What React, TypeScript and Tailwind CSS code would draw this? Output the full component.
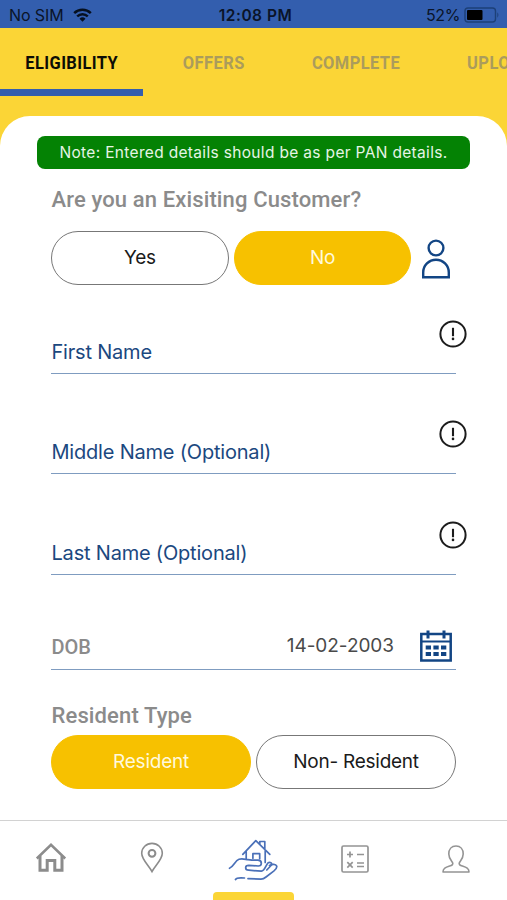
import { useState } from "react";
import clsx from "clsx";

const tabs = [
  { label: "ELIGIBILITY", className: "w-[143px]" },
  { label: "OFFERS", className: "w-[142px]" },
  { label: "COMPLETE", className: "w-[143px]" },
  { label: "UPLOAD", className: "w-[143px]" },
];

function StatusBar() {
  return (
    <div className="flex h-7 shrink-0 items-center bg-[#335eae] pt-0.5 text-[16px] text-[#0a1428]">
      <div className="flex w-[170px] items-center gap-[9px] pl-[9px]">
        <span className="tracking-[-0.1px]">No SIM</span>
        <svg width="19" height="14" viewBox="0 0 19 14" fill="none" stroke="#06101f">
          <path d="M1.2 5.2C5.8 .7 13.2 .7 17.8 5.2" strokeWidth="2.5" />
          <path d="M4.2 8.4c3-2.9 7.6-2.9 10.6 0" strokeWidth="2.4" />
          <path d="M6.500 10.800a4.300 4.300 0 0 1 6 0l-3 3z" fill="#06101f" stroke="none" />
        </svg>
      </div>
      <div className="w-[171px] pt-px text-center text-[15.5px] font-semibold tracking-[0.5px]">12:08 PM</div>
      <div className="flex flex-1 items-center justify-end gap-1 pr-[7px]">
        <span className="tracking-[-0.4px]">52%</span>
        <svg width="36" height="16" viewBox="0 0 36 16">
          <rect x="1" y="1" width="30.500" height="14" rx="3" fill="none" stroke="#1d4078" strokeWidth="1.4" />
          <rect x="3" y="3" width="15.500" height="10" rx="1" fill="#000" />
          <path d="M33.300 5.300q2.300 2.700 0 5.400z" fill="#1d4078" />
        </svg>
      </div>
    </div>
  );
}

function InfoIcon() {
  return (
    <svg className="absolute -right-[11px] top-0" width="28" height="28" viewBox="0 0 28 28" fill="none" stroke="#1c1c1c">
      <circle cx="14" cy="14" r="12.600" strokeWidth="2" />
      <path d="M14 7.800v8.400" strokeWidth="2.100" />
      <circle cx="14" cy="18.900" r="1.300" fill="#1c1c1c" stroke="none" />
    </svg>
  );
}

function Field({ label }: { label: string }) {
  return (
    <div className="relative mb-[46.5px] flex h-[54px] items-end border-b-[1.5px] border-[#7f9cc0] pb-[6px] pl-[0.5px] text-[20px] leading-[30px] tracking-[-0.2px] text-[#1b4880]">
      {label}
      <InfoIcon />
    </div>
  );
}

function Pill({ label, active, onClick, className }: { label: string; active: boolean; onClick: () => void; className: string }) {
  return (
    <button
      onClick={onClick}
      className={clsx(
        "h-[54px] rounded-[27px] border text-[19px] tracking-[-0.25px]",
        active ? "border-[#f7c100] bg-[#f7c100] text-[#fff9dd]" : "border-[#777] bg-white text-[#1a1a1a]",
        className
      )}
    >
      {label}
    </button>
  );
}

function CalendarIcon() {
  return (
    <svg className="relative top-px" width="32" height="33" viewBox="0 0 32 33" fill="none" stroke="#124584">
      <rect x="1.300" y="4" width="29.400" height="26.500" strokeWidth="2.500" />
      <path d="M1 11.500h30" strokeWidth="2" />
      <path d="M8 .5v8M24 .5v8" strokeWidth="3" />
      <path d="M5.700 17.400h5.300M13.400 17.400h5.300M21 17.400h5.300M5.700 24h5.300M13.400 24h5.300M21 24h5.300" strokeWidth="4" />
    </svg>
  );
}

function BottomNav() {
  return (
    <nav className="grid h-20 shrink-0 grid-cols-5 border-t-[1.5px] border-[#d2d2d2] bg-white">
      <div className="flex justify-center pt-[21px]">
        <svg width="32" height="32" viewBox="0 0 32 32" fill="none" stroke="#8c8c8c">
          <path d="M1.800 16.500 16 2.800 30.200 16.500" strokeWidth="2.500" />
          <path d="M5 14v14.200h7.200V18.500h7.600v9.700H27V14" strokeWidth="3" />
        </svg>
      </div>
      <div className="flex justify-center pt-[21px]">
        <svg width="24" height="32" viewBox="0 0 24 32" fill="none" stroke="#8c8c8c" strokeWidth="1.600">
          <path d="M12 29.500C8.800 23.500 1.700 17.500 1.700 11.200a10.300 9.800 0 0 1 20.600 0C22.300 17.500 15.200 23.500 12 29.500z" />
          <circle cx="12" cy="11.300" r="3.400" strokeWidth="2" />
        </svg>
      </div>
      <div className="relative flex justify-center pt-[17px]">
        <svg width="50" height="43" viewBox="0 0 50 43" fill="none" stroke="#4a70b8" strokeWidth="1.700" strokeLinecap="round" strokeLinejoin="round">
          <path d="M14.800 16.300 27.800 2.700 41.800 16.300M18.200 13.500v7.300M37.200 13v11.500M31.800 6V3.500h5v8M24.900 20.300v-4.600h6.800v5" />
          <path d="M1.500 30.300C5.500 29 7 22.700 11 21.300c3-.9 6 0 9 .3 3 .5 6 .7 10 .6 4.600.4 4.200 5.600.3 5.800l-9.500-.7c-4.200 0-4.200 4.600 0 4.900l12.500 1c3.800-.4 4.400-6.400 6.800-8.400 2-1.300 4.300.3 3.400 2.200l-4.700 5" />
          <path d="M41.500 27.500c2.800-1.700 6.300-1.700 7.200.6.600 2-1.300 3.600-3 5L38 39c-1.700 1.500-3 2.200-5 2.200l-13-.6M7.500 41.500c1-2 4-2 9-1.500" />
        </svg>
        <div className="absolute bottom-0 h-2 w-[81px] rounded-t-[4px] bg-[#fbd536]" />
      </div>
      <div className="flex justify-center pt-6">
        <svg width="28" height="28" viewBox="0 0 28 28" fill="none" stroke="#949494" strokeWidth="1.700">
          <rect x="1" y="1" width="26" height="26" rx="1.500" />
          <path d="M6 9.500h6M9 6.500v6M16 9.500h7M6.300 17.200l5.400 5.400M11.700 17.200l-5.400 5.400M16 18h7M16 21.500h7" />
        </svg>
      </div>
      <div className="flex justify-center pt-6">
        <svg width="28" height="29" viewBox="0 0 28 29" fill="none" stroke="#949494" strokeWidth="1.600" strokeLinejoin="round">
          <path d="M14 1C9.500 1 6.800 4.200 6.800 9c0 4.300 2.200 6.300 3.700 8.500.9 1.600-.2 2.700-2 3.300C4 22.300 1 23 1 27h26c0-4-3-4.700-7.500-6.200-1.800-.6-2.900-1.700-2-3.300 1.500-2.200 3.700-4.200 3.700-8.500C21.200 4.200 18.500 1 14 1z" />
        </svg>
      </div>
    </nav>
  );
}

export default function App() {
  const [tab, setTab] = useState("ELIGIBILITY");
  const [existing, setExisting] = useState("No");
  const [resident, setResident] = useState("Resident");

  return (
    <div className="flex h-[900px] w-[507px] flex-col overflow-hidden bg-[#fbd536] font-[Inter,sans-serif]">
      <StatusBar />
      <div className="flex h-[88px] shrink-0 items-start overflow-hidden">
        {tabs.map((t) => (
          <button
            key={t.label}
            onClick={() => setTab(t.label)}
            className={clsx(
              "flex h-[68px] shrink-0 items-center justify-center border-b-[7px] pt-[10px] font-[Roboto,sans-serif] text-[19px] font-bold tracking-[0.5px]",
              t.className,
              tab === t.label ? "border-[#335eae] text-[#0d0d05]" : "border-transparent text-[#ab9c5c]"
            )}
          >
            <span className="inline-block scale-x-[0.865]">{t.label}</span>
          </button>
        ))}
      </div>

      <main className="min-h-0 flex-1 rounded-t-[30px] bg-white pt-5">
        <div className="ml-[37px] flex h-[33px] w-[433px] items-center justify-center rounded-[8px] bg-[#048204] pt-px text-[15.5px] tracking-[0.33px] text-[#e6f5e6]">
          Note: Entered details should be as per PAN details.
        </div>
        <div className="ml-[51px] w-[405px]">
          <h2 className="mt-[16px] h-[30px] whitespace-nowrap pl-[0.5px] font-[Roboto,sans-serif] text-[22px] font-medium leading-[30px] tracking-[0.13px] text-[#8b8b8b]">
            Are you an Exisiting Customer?
          </h2>
          <div className="mt-[16px] flex items-center gap-[5px]">
            <Pill label="Yes" active={existing === "Yes"} onClick={() => setExisting("Yes")} className="w-[178px]" />
            <Pill label="No" active={existing === "No"} onClick={() => setExisting("No")} className="w-[177px]" />
            <svg className="relative top-px ml-[5px] shrink-0" width="30" height="40" viewBox="0 0 30 40" fill="none" stroke="#124584" strokeWidth="2.400">
              <circle cx="15" cy="9" r="7.400" />
              <path d="M2.200 38.300V33.500a12.800 12.800 0 0 1 25.600 0v4.800z" />
            </svg>
          </div>

          <div className="mt-[34.5px]">
            <Field label="First Name" />
            <Field label="Middle Name (Optional)" />
            <Field label="Last Name (Optional)" />
          </div>

          <div className="flex h-[49px] items-center border-b-[1.5px] border-[#7f9cc0] pr-1">
            <span className="pl-[0.5px] pt-1 font-[Roboto,sans-serif] text-[20px] font-medium text-[#8b8b8b]">DOB</span>
            <span className="ml-auto mr-[26px] pt-[3px] text-[19px] tracking-[-0.05px] text-[#4a4a4a]">14-02-2003</span>
            <CalendarIcon />
          </div>

          <h2 className="mt-[31px] h-[30px] pl-[0.5px] font-[Roboto,sans-serif] text-[22px] font-medium leading-[30px] tracking-[0.13px] text-[#8b8b8b]">
            Resident Type
          </h2>
          <div className="mt-[4px] flex gap-[5px]">
            <Pill label="Resident" active={resident === "Resident"} onClick={() => setResident("Resident")} className="w-[200px]" />
            <Pill label="Non- Resident" active={resident === "Non- Resident"} onClick={() => setResident("Non- Resident")} className="w-[200px]" />
          </div>
        </div>
      </main>
      <BottomNav />
    </div>
  );
}
